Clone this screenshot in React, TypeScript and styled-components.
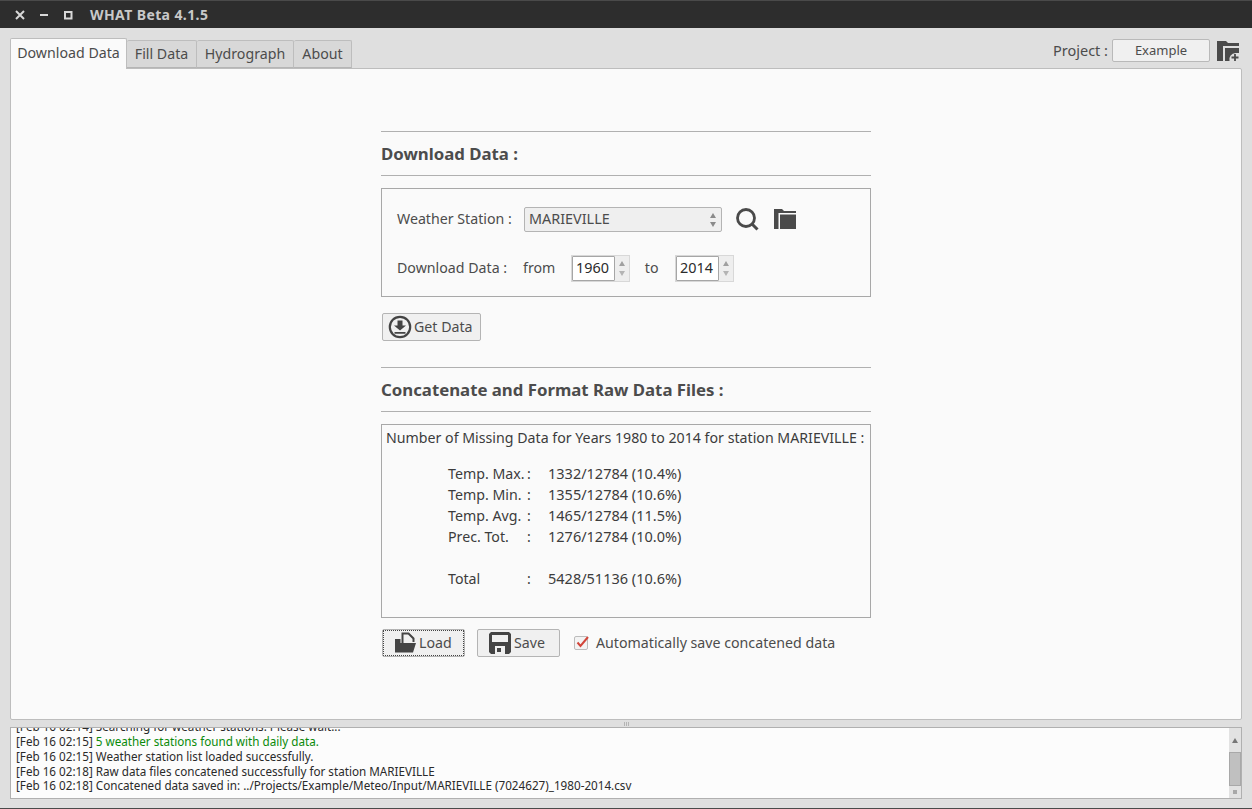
import React from 'react'
import styled, {createGlobalStyle} from 'styled-components'

const FONT = `"Noto Sans", "Open Sans", "Liberation Sans", sans-serif`

const Global = createGlobalStyle`
  html, body {
    margin: 0;
    padding: 0;
    height: 100%;
    overflow: hidden;
    background: #dfdfdf;
  }
  * {
    box-sizing: border-box;
  }
`
const Window = styled.div`
  width: 1252px;
  height: 809px;
  display: flex;
  flex-direction: column;
  font-family: ${FONT};
  font-size: 14.2px;
  color: #4c4c4c;
  background: #dfdfdf;
  border-bottom: 1px solid #4a4a4a;
`
const TitleBar = styled.div`
  height: 28px;
  flex: none;
  display: flex;
  align-items: center;
  padding-left: 14px;
  background: #2d2d2d;
  border-top: 1px solid #4a4a4a;
`
const WinButton = styled.svg`
  width: 12px;
  height: 12px;
  margin-right: 12px;
  display: block;
`
const Title = styled.span`
  margin-left: 4px;
  font-size: 14px;
  font-weight: 700;
  letter-spacing: 0.4px;
  color: #c9c9c9;
`
const Body = styled.div`
  flex: 1;
  display: flex;
  flex-direction: column;
  padding: 9px 10px 9px;
  min-height: 0;
`
const TopRow = styled.div`
  height: 31px;
  flex: none;
  display: flex;
  align-items: flex-end;
  justify-content: space-between;
`
const Tabs = styled.div`
  display: flex;
  align-items: flex-end;
  height: 31px;
`
const Tab = styled.div<{$active?: boolean; $w: number}>`
  display: flex;
  align-items: center;
  justify-content: center;
  width: ${({$w}) => $w}px;
  height: ${({$active}) => ($active ? 31 : 28)}px;
  padding-bottom: ${({$active}) => ($active ? 3 : 2)}px;
  color: #4c4c4c;
  background: ${({$active}) => ($active ? '#fafafa' : '#d8d8d8')};
  border: 1px solid #bdbdbd;
  border-bottom: ${({$active}) => ($active ? 'none' : '1px solid #b5b5b5')};
  border-left: ${({$active}) => ($active ? '1px solid #bdbdbd' : 'none')};
  border-radius: 2px 2px 0 0;
  margin-bottom: ${({$active}) => ($active ? -1 : 0)}px;
  position: relative;
  z-index: ${({$active}) => ($active ? 1 : 0)};
`
const ProjectBar = styled.div`
  display: flex;
  align-items: center;
  height: 31px;
  padding-bottom: 4px;
`
const ProjectLabel = styled.span`
  margin-right: 4px;
  padding-bottom: 2px;
  font-size: 14.5px;
`
const ProjectName = styled.div`
  width: 98px;
  height: 23px;
  display: flex;
  align-items: center;
  justify-content: center;
  padding-bottom: 2px;
  font-size: 13px;
  background: #f0f0f0;
  border: 1px solid #b9b9b9;
  border-radius: 2px;
`
const ProjectIcon = styled.svg`
  width: 24px;
  height: 22px;
  margin-left: 6px;
  margin-right: 2px;
  display: block;
`
const MainPanel = styled.div`
  height: 652px;
  flex: none;
  display: flex;
  flex-direction: column;
  align-items: center;
  padding-top: 62px;
  background: #fafafa;
  border: 1px solid #bdbdbd;
  border-radius: 0 2px 2px 2px;
`
const Column = styled.div`
  width: 490px;
  display: flex;
  flex-direction: column;
`
const Heading = styled.div`
  height: 45px;
  display: flex;
  align-items: center;
  font-size: 16.8px;
  font-weight: 700;
  color: #4c4c4c;
  border-top: 1px solid #b0b0b0;
  border-bottom: 1px solid #b0b0b0;
`
const Group = styled.div<{$h: number}>`
  height: ${({$h}) => $h}px;
  margin-top: 12px;
  border: 1px solid #a8a8a8;
`
const StationGroup = styled(Group)`
  padding: 18px 15px 0;
  display: flex;
  flex-direction: column;
  gap: 24px;
`
const FormRow = styled.div`
  display: flex;
  align-items: center;
  height: 25px;
`
const FieldLabel = styled.span<{$w: number}>`
  width: ${({$w}) => $w}px;
  flex: none;
  padding-bottom: 2px;
  white-space: nowrap;
`
const Combo = styled.div`
  width: 198px;
  height: 25px;
  display: flex;
  align-items: center;
  justify-content: space-between;
  padding: 0 5px 0 4px;
  background: #efefef;
  border: 1px solid #b4b4b4;
  border-radius: 2px;
`
const ComboText = styled.span`
  padding-bottom: 2px;
  font-size: 14.4px;
`
const ComboArrows = styled.div`
  display: flex;
  flex-direction: column;
  gap: 4px;
`
const Tri = styled.div<{$down?: boolean; $c?: string}>`
  width: 0;
  height: 0;
  border-left: 3px solid transparent;
  border-right: 3px solid transparent;
  ${({$down, $c}) =>
    $down ? `border-top: 5px solid ${$c || '#8a8a8a'};` : `border-bottom: 5px solid ${$c || '#8a8a8a'};`}
`
const ToolIcon = styled.svg<{$ml: number}>`
  width: 24px;
  height: 24px;
  margin-left: ${({$ml}) => $ml}px;
  margin-top: -2px;
  display: block;
`
const Spin = styled.div`
  width: 59px;
  height: 27px;
  flex: none;
  display: flex;
  border: 1px solid #d8d8d8;
  background: #e4e4e4;
`
const SpinInput = styled.div`
  width: 43px;
  display: flex;
  align-items: center;
  padding: 0 0 2px 3px;
  font-size: 14.4px;
  color: #2c2c2c;
  background: #ffffff;
  border: 1px solid #a6a6a6;
  border-radius: 1px;
`
const SpinArrows = styled.div`
  flex: 1;
  display: flex;
  flex-direction: column;
  align-items: center;
  justify-content: space-around;
  padding: 3px 0;
  background: #eeeeee;
`
const ButtonRow = styled.div<{$mt: number; $mb: number}>`
  display: flex;
  align-items: center;
  margin-top: ${({$mt}) => $mt}px;
  margin-bottom: ${({$mb}) => $mb}px;
  margin-left: 1px;
`
const Button = styled.div<{$w: number; $pad: number; $focus?: boolean; $ml?: number}>`
  width: ${({$w}) => $w}px;
  height: 28px;
  margin-left: ${({$ml}) => $ml || 0}px;
  flex: none;
  display: flex;
  align-items: center;
  padding-left: ${({$pad}) => $pad}px;
  gap: 2px;
  background: #f0f0f0;
  border: 1px solid #b4b4b4;
  border-radius: 2px;
  ${({$focus}) => ($focus ? 'outline: 1px dotted #444; outline-offset: -2px;' : '')}
`
const ButtonText = styled.span`
  padding-bottom: 2px;
`
const ButtonIcon = styled.svg`
  width: 24px;
  height: 24px;
  flex: none;
  display: block;
`
const Check = styled.div`
  width: 14px;
  height: 14px;
  margin-left: 14px;
  margin-right: 8px;
  flex: none;
  background: #f3f3f3;
  border: 1px solid #bcbcbc;
  border-radius: 2px;
  position: relative;
`
const CheckMark = styled.svg`
  position: absolute;
  left: -1px;
  top: -4px;
  width: 17px;
  height: 17px;
`
const CheckLabel = styled.span`
  padding-bottom: 2px;
  white-space: nowrap;
`
const StatsGroup = styled(Group)`
  padding: 3px 4px;
  color: #3c3c3c;
`
const StatsTitle = styled.div`
  height: 20px;
  line-height: 20px;
  margin-bottom: 15px;
  white-space: nowrap;
`
const StatRow = styled.div<{$gap?: boolean}>`
  display: grid;
  grid-template-columns: 79px 21px 1fr;
  height: 21px;
  line-height: 21px;
  padding-left: 62px;
  margin-top: ${({$gap}) => ($gap ? 21 : 0)}px;
`
const StatValue = styled.span`
  font-size: 14.5px;
`
const Splitter = styled.div`
  height: 7px;
  flex: none;
  display: flex;
  justify-content: center;
  align-items: center;
  gap: 1px;
`
const Grip = styled.div`
  width: 1px;
  height: 4px;
  background: #b4b4b4;
`
const Log = styled.div`
  height: 72px;
  flex: none;
  display: flex;
  background: #fcfcfc;
  border: 1px solid #b0b0b0;
`
const LogText = styled.div`
  flex: 1;
  display: flex;
  flex-direction: column;
  justify-content: flex-end;
  overflow: hidden;
  padding: 0 0 4px 5px;
  font-size: 11.68px;
  line-height: 14.75px;
  color: #2a2a2a;
  white-space: nowrap;
`
const LogLine = styled.div`
  flex: none;
`
const LogGreen = styled.span`
  color: #0a8a0a;
`
const ScrollBar = styled.div`
  width: 12px;
  flex: none;
  display: flex;
  flex-direction: column;
  background: #e2e2e2;
`
const ScrollEnd = styled.div<{$h: number}>`
  height: ${({$h}) => $h}px;
  display: flex;
  align-items: center;
  justify-content: center;
`
const ScrollSquare = styled.div`
  width: 4px;
  height: 4px;
  background: #a8a8a8;
`
const ScrollThumb = styled.div`
  height: 34px;
  background: #c0c0c0;
  border: 1px solid #a8a8a8;
`

const stats = [
  ['Temp. Max.', '1332/12784 (10.4%)'],
  ['Temp. Min.', '1355/12784 (10.6%)'],
  ['Temp. Avg.', '1465/12784 (11.5%)'],
  ['Prec. Tot.', '1276/12784 (10.0%)'],
]

const Spinner = ({value}: {value: string}) => (
  <Spin>
    <SpinInput>{value}</SpinInput>
    <SpinArrows>
      <Tri $c="#a0a0a0" />
      <Tri $down $c="#b4b4b4" />
    </SpinArrows>
  </Spin>
)

const App = () => {
  return (
    <Window>
      <Global />
      <TitleBar>
        <WinButton viewBox="0 0 12 12">
          <path d="M2 2l8 8M10 2l-8 8" stroke="#d8d8d8" strokeWidth="2" fill="none" />
        </WinButton>
        <WinButton viewBox="0 0 12 12">
          <path d="M2 6h8" stroke="#d8d8d8" strokeWidth="2" fill="none" />
        </WinButton>
        <WinButton viewBox="0 0 12 12">
          <path d="M3 3h6.5v6.5H3z" stroke="#d8d8d8" strokeWidth="2" fill="none" />
        </WinButton>
        <Title>WHAT Beta 4.1.5</Title>
      </TitleBar>
      <Body>
        <TopRow>
          <Tabs>
            <Tab $active $w={117}>Download Data</Tab>
            <Tab $w={70}>Fill Data</Tab>
            <Tab $w={97}>Hydrograph</Tab>
            <Tab $w={58}>About</Tab>
          </Tabs>
          <ProjectBar>
            <ProjectLabel>Project :</ProjectLabel>
            <ProjectName>Example</ProjectName>
            <ProjectIcon viewBox="0 0 24 22">
              <path d="M1 1h9l2 2h11v3H7v15H1z M9 8h14v5h-3.500a6.500 6.500 0 0 0-6 8H9z" fill="#4a4a4a" />
              <path d="M19 14v7M15.500 17.500h7" stroke="#4a4a4a" strokeWidth="1.800" fill="none" />
            </ProjectIcon>
          </ProjectBar>
        </TopRow>
        <MainPanel>
          <Column>
            <Heading>Download Data :</Heading>
            <StationGroup $h={109}>
              <FormRow>
                <FieldLabel $w={127}>Weather Station :</FieldLabel>
                <Combo>
                  <ComboText>MARIEVILLE</ComboText>
                  <ComboArrows>
                    <Tri />
                    <Tri $down />
                  </ComboArrows>
                </Combo>
                <ToolIcon $ml={13} viewBox="0 0 24 24">
                  <circle cx="11" cy="11" r="8.500" stroke="#4a4a4a" strokeWidth="2.800" fill="none" />
                  <path d="M17 17l5.500 5.500" stroke="#4a4a4a" strokeWidth="3" fill="none" />
                </ToolIcon>
                <ToolIcon $ml={14} viewBox="0 0 24 24">
                  <path d="M1 2h8l2 2h12v2H5.500v16H1z M7 7.500h16V22H7z" fill="#4a4a4a" />
                </ToolIcon>
              </FormRow>
              <FormRow>
                <FieldLabel $w={126}>Download Data :</FieldLabel>
                <FieldLabel $w={48}>from</FieldLabel>
                <Spinner value="1960" />
                <FieldLabel $w={45}>&nbsp;&nbsp;&nbsp;&nbsp;to</FieldLabel>
                <Spinner value="2014" />
              </FormRow>
            </StationGroup>
            <ButtonRow $mt={16} $mb={26}>
              <Button $w={99} $pad={5}>
                <ButtonIcon viewBox="0 0 24 24">
                  <circle cx="12" cy="12" r="10.200" stroke="#444" strokeWidth="2.200" fill="none" />
                  <path d="M9.500 5.500h5v5h3.500L12 15.500 6 10.500h3.500z M6.500 17h11v1.800h-11z" fill="#444" />
                </ButtonIcon>
                <ButtonText>Get Data</ButtonText>
              </Button>
            </ButtonRow>
            <Heading>Concatenate and Format Raw Data Files :</Heading>
            <StatsGroup $h={194}>
              <StatsTitle>Number of Missing Data for Years 1980 to 2014 for station MARIEVILLE :</StatsTitle>
              {stats.map(([name, value]) => (
                <StatRow key={name}>
                  <span>{name}</span>
                  <span>:</span>
                  <StatValue>{value}</StatValue>
                </StatRow>
              ))}
              <StatRow $gap>
                <span>Total</span>
                <span>:</span>
                <StatValue>5428/51136 (10.6%)</StatValue>
              </StatRow>
            </StatsGroup>
            <ButtonRow $mt={11} $mb={0}>
              <Button $w={83} $pad={10} $focus>
                <ButtonIcon viewBox="0 0 24 24">
                  <path d="M9.500 12V2.500h6l5 5V11" stroke="#444" strokeWidth="2" fill="none" />
                  <path d="M2 8h5.500v4H23l-3 9.500H2z" fill="#444" />
                </ButtonIcon>
                <ButtonText>Load</ButtonText>
              </Button>
              <Button $w={83} $pad={10} $ml={12}>
                <ButtonIcon viewBox="0 0 24 24">
                  <path
                    d="M3 1h18l2 2v18l-2 2H3l-2-2V3z M4 4v7h16V4z M7 15v8h10v-8z M9 17h4v4H9z"
                    fill="#444"
                    fillRule="evenodd"
                  />
                </ButtonIcon>
                <ButtonText>Save</ButtonText>
              </Button>
              <Check>
                <CheckMark viewBox="0 0 17 17">
                  <path d="M3.500 9.500l3 3.500L14 4" stroke="#d2453a" strokeWidth="2" fill="none" />
                </CheckMark>
              </Check>
              <CheckLabel>Automatically save concatened data</CheckLabel>
            </ButtonRow>
          </Column>
        </MainPanel>
        <Splitter>
          <Grip />
          <Grip />
          <Grip />
        </Splitter>
        <Log>
          <LogText>
            <LogLine>[Feb 16 02:14] Searching for weather stations. Please wait...</LogLine>
            <LogLine>
              [Feb 16 02:15] <LogGreen>5 weather stations found with daily data.</LogGreen>
            </LogLine>
            <LogLine>[Feb 16 02:15] Weather station list loaded successfully.</LogLine>
            <LogLine>[Feb 16 02:18] Raw data files concatened successfully for station MARIEVILLE</LogLine>
            <LogLine>[Feb 16 02:18] Concatened data saved in: ../Projects/Example/Meteo/Input/MARIEVILLE (7024627)_1980-2014.csv</LogLine>
          </LogText>
          <ScrollBar>
            <ScrollEnd $h={24}>
              <Tri $c="#777" />
            </ScrollEnd>
            <ScrollThumb />
            <ScrollEnd $h={12}>
              <ScrollSquare />
            </ScrollEnd>
          </ScrollBar>
        </Log>
      </Body>
    </Window>
  )
}

export default App
